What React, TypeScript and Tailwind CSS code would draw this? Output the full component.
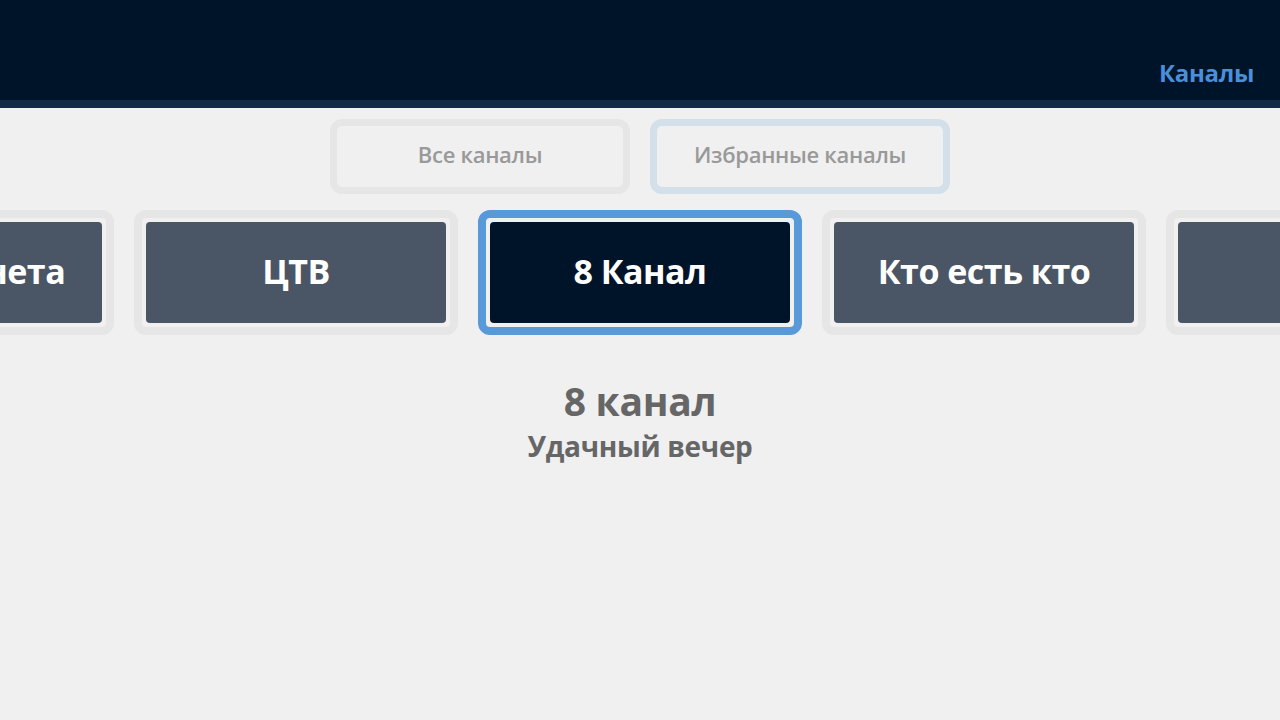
import React from "react";

const font = { fontFamily: '"Open Sans", "Noto Sans", sans-serif' };

function Card({ label, active }: { label: string; active?: boolean }) {
  return (
    <div
      className={
        "shrink-0 w-[324px] h-[125px] rounded-[12px] border-[8px] p-[4px] " +
        (active ? "border-[#5799d9]" : "border-[#e6e6e6]")
      }
    >
      <div
        className={
          "h-full w-full rounded-[4px] flex items-center justify-center pb-[3px] text-white font-bold text-[34px] leading-none whitespace-nowrap overflow-hidden tracking-[-0.5px] " +
          (active ? "bg-[#001429]" : "bg-[#4a5665]")
        }
      >
        {label}
      </div>
    </div>
  );
}

export default function App() {
  return (
    <div className="w-[1280px] h-[720px] bg-[#f0f0f0] overflow-hidden" style={font}>
      <div className="h-[108px] bg-[#001429] border-b-[8px] border-[#132a45] flex justify-end items-start pr-[26px] pt-[57px]">
        <span className="text-[24px] leading-[32px] font-bold text-[#4a8fd9] tracking-[-0.3px]">Каналы</span>
      </div>
      <div className="flex justify-center gap-[20px] mt-[11px]">
        <div className="w-[300px] h-[75px] rounded-[12px] border-[7px] border-[#e6e6e6] flex items-center justify-center pb-[4px] text-[22px] font-semibold text-[#999999] tracking-[-0.3px]">
          Все каналы
        </div>
        <div className="w-[300px] h-[75px] rounded-[12px] border-[7px] border-[#d3dfe9] flex items-center justify-center pb-[4px] text-[22px] font-semibold text-[#999999] tracking-[-0.3px]">
          Избранные каналы
        </div>
      </div>
      <div className="flex justify-center gap-[20px] mt-[16px] w-[1280px]">
        <Card label="Моя Планета" />
        <Card label="ЦТВ" />
        <Card label="8 Канал" active />
        <Card label="Кто есть кто" />
        <Card label="ТНТ" />
      </div>
      <div className="flex flex-col items-center mt-[42px] text-[#666666]">
        <div className="text-[39px] leading-[48px] font-bold tracking-[-0.3px]">8 канал</div>
        <div className="text-[28px] leading-[34px] font-bold mt-[4px] tracking-[-0.3px]">Удачный вечер</div>
      </div>
    </div>
  );
}
